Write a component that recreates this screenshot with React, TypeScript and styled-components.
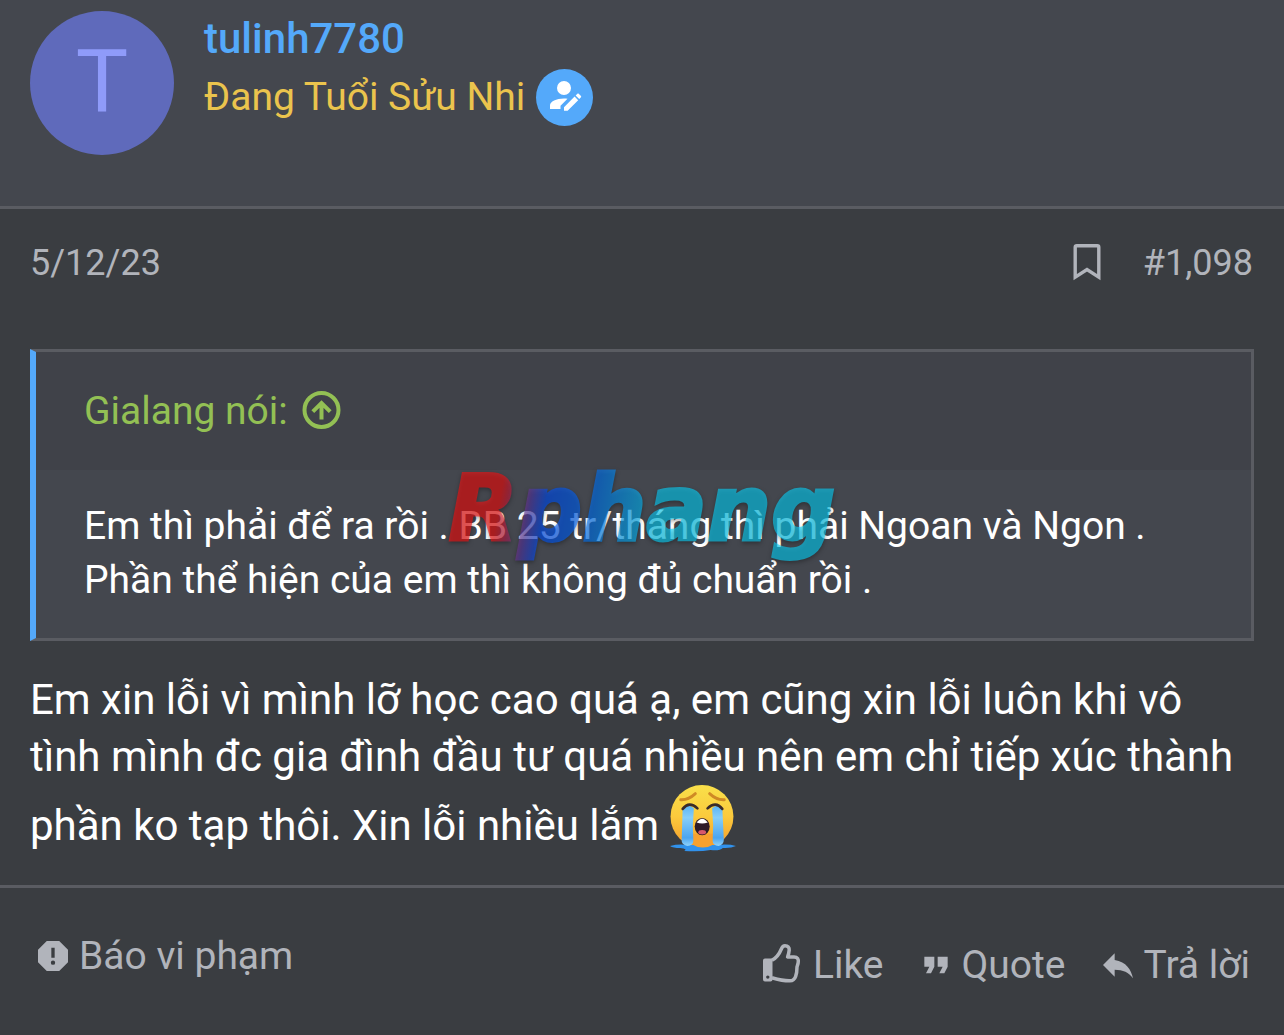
import React from "react";
import styled, { createGlobalStyle } from "styled-components";

const color = {
  page: "#3a3d41",
  panel: "#44474e",
  panelDark: "#404249",
  line: "#5a5c62",
  muted: "#b1b4bb",
  blue: "#54a9fa",
  yellow: "#ebc44d",
  green: "#93c054",
};

const GlobalStyle = createGlobalStyle`
  * { box-sizing: border-box; }
  body {
    margin: 0;
    background: ${color.page};
    color: #fff;
    font-family: Roboto, "Noto Sans", sans-serif;
  }
  a { color: inherit; text-decoration: none; }
`;

const Post = styled.article`
  position: relative;
  display: flex;
  flex-direction: column;
  min-height: 100vh;
`;

const UserBar = styled.header`
  display: flex;
  gap: 30px;
  padding: 11px 30px 51px;
  background: ${color.panel};
  border-bottom: 3px solid ${color.line};
`;

const Avatar = styled.a`
  display: grid;
  place-items: center;
  width: 144px;
  height: 144px;
  padding-bottom: 4px;
  border-radius: 50%;
  background: #5f6abb;
  && { color: #8f9bf9; }
  font-size: 88px;
  line-height: 1;
`;

const UserText = styled.div`
  display: flex;
  flex-direction: column;
`;

const UserName = styled.a`
  && { color: ${color.blue}; }
  font-size: 42px;
  font-weight: 500;
  line-height: 56px;
`;

const UserTitle = styled.div`
  display: flex;
  align-items: center;
  gap: 11px;
  color: ${color.yellow};
  font-size: 39px;
  line-height: 60px;
`;

const AuthorBadge = styled.span`
  display: grid;
  place-items: center;
  width: 57px;
  height: 57px;
  padding: 0 2px 4px 0;
  border-radius: 50%;
  background: ${color.blue};
  color: #fff;
`;

const Meta = styled.div`
  display: flex;
  align-items: center;
  justify-content: space-between;
  padding: 29px 31px 0 30px;
  color: ${color.muted};
  font-size: 36px;
  line-height: 50px;
`;

const MetaActions = styled.div`
  display: flex;
  align-items: center;
  gap: 42px;
`;

const IconButton = styled.button`
  display: flex;
  padding: 0;
  border: 0;
  background: none;
  color: inherit;
`;

const Content = styled.div`
  padding: 61px 30px 31px;
`;

const Quote = styled.blockquote`
  margin: 0;
  border: 3px solid ${color.line};
  border-left: 6px solid ${color.blue};
  background: ${color.panel};
  font-size: 39px;
  line-height: 54px;
`;

const QuoteTitle = styled.a`
  display: flex;
  align-items: center;
  gap: 14px;
  padding: 32px 48px;
  background: ${color.panelDark};
  && { color: ${color.green}; }
`;

const QuoteText = styled.p`
  margin: 0;
  padding: 29px 48px 31px;
`;

const Message = styled.p`
  margin: 30px 0 0;
  font-size: 42px;
  line-height: 57px;
`;

const Smilie = styled.svg`
  width: 66px;
  height: 67px;
  vertical-align: -12px;
`;

const ActionBar = styled.footer`
  display: flex;
  justify-content: space-between;
  padding: 41px 30px;
  border-top: 3px solid ${color.line};
`;

const ActionGroup = styled.div<{ $low?: boolean }>`
  display: flex;
  align-items: flex-start;
  gap: 25px;
  padding-top: ${(p) => (p.$low ? "9px" : "0")};
`;

const Action = styled.button`
  display: flex;
  align-items: center;
  gap: 6px;
  padding: 0 4px 0 3px;
  border: 0;
  background: none;
  color: ${color.muted};
  font: 400 39px/54px Roboto, "Noto Sans", sans-serif;
`;

const WatermarkLayer = styled.div`
  position: absolute;
  inset: 0;
  display: grid;
  place-items: center;
  padding-bottom: 18px;
  pointer-events: none;
  filter: drop-shadow(0 2px 2px rgba(0, 0, 0, 0.5));
`;

const Watermark = styled.span`
  padding: 0 8px;
  font: italic 700 90px/108px "DejaVu Sans", sans-serif;
  color: transparent;
  background: linear-gradient(100deg, #f81010 16%, #0050f8 27%, #0068f8 36%, #08d2fa 54%);
  background-clip: text;
  -webkit-background-clip: text;
  -webkit-text-stroke: 3px transparent;
  opacity: 0.6;
`;

const Glyph = ({ d, size = 40 }: { d: string; size?: number }) => (
  <svg width={size} height={size} viewBox="0 0 24 24" fill="currentColor" aria-hidden="true">
    <path d={d} />
  </svg>
);

const paths = {
  authorEdit:
    "M21.7,13.35L20.7,14.35L18.65,12.3L19.65,11.3C19.86,11.09 20.21,11.09 20.42,11.3L21.7,12.58C21.91,12.79 21.91,13.14 21.7,13.35M12,18.94L18.06,12.88L20.11,14.94L14.06,21H12V18.94M12,14C7.58,14 4,15.79 4,18V20H10V18.11L14,14.11C13.34,14.03 12.67,14 12,14M12,4A4,4 0 0,0 8,8A4,4 0 0,0 12,12A4,4 0 0,0 16,8A4,4 0 0,0 12,4Z",
  alert:
    "M13,13H11V7H13M12,17.3A1.3,1.3 0 0,1 10.7,16A1.3,1.3 0 0,1 12,14.7A1.3,1.3 0 0,1 13.3,16A1.3,1.3 0 0,1 12,17.3M15.73,3H8.27L3,8.27V15.73L8.27,21H15.73L21,15.73V8.27L15.73,3Z",
  quote: "M14,17H17L19,13V7H13V13H16M6,17H9L11,13V7H5V13H8L6,17Z",
  reply: "M10,9V5L3,12L10,19V14.9C15,14.9 18.5,16.5 21,20C20,15 17,10 10,9Z",
};

const BookmarkIcon = () => (
  <svg width="28" height="40" viewBox="0 0 28 40" fill="none" stroke="currentColor" strokeWidth="3.4" aria-hidden="true">
    <path d="M2.2 34.2V4.2Q2.2 2.7 3.7 2.7H24.3Q25.8 2.7 25.8 4.2V34.2L14 26.6Z" />
  </svg>
);

const ArrowCircleIcon = () => (
  <svg width="40" height="40" viewBox="0 0 40 40" fill="none" stroke="currentColor" strokeWidth="4" aria-hidden="true">
    <circle cx="19.5" cy="19" r="17" />
    <path d="M19.5 28.4V12M10.8 20.6L19.5 12L28.2 20.6" />
  </svg>
);

const ThumbIcon = () => (
  <svg width="46" height="42" viewBox="0 0 46 42" aria-hidden="true">
    <path
      d="M11 16.2C15.5 14 18.5 9.5 20.6 4.5C21.4 2.4 22.5 1.8 24 1.8C27 1.8 28.4 3.5 28.2 6C28 8.5 27.6 10.5 26.6 13H33C36.5 13 37.8 15 37.2 18.5C37 20 36.4 21.5 36 23C36 27 35.6 30 34.6 32.5C33.6 35.5 32 36.8 29 36.8C22 37 17 35.5 11 33.8"
      fill="none"
      stroke="currentColor"
      strokeWidth="3.5"
      strokeLinejoin="round"
    />
    <path
      d="M4 14.5H11.5V35.5Q11.5 37.5 9.5 37.5H4Q2 37.5 2 35.5V16.5Q2 14.5 4 14.5ZM6.8 31.4A1.7 1.7 0 1 0 6.8 34.8A1.7 1.7 0 1 0 6.8 31.4Z"
      fill="currentColor"
      fillRule="evenodd"
    />
  </svg>
);

const CryingFace = () => (
  <Smilie viewBox="0 0 65 66" role="img" aria-label="crying">
    <defs>
      <linearGradient id="face" x1="0" y1="0" x2="0" y2="1">
        <stop offset="0" stopColor="#f9e04a" />
        <stop offset="0.5" stopColor="#fbca3d" />
        <stop offset="1" stopColor="#f39a2b" />
      </linearGradient>
      <linearGradient id="tear" x1="0" y1="0" x2="0" y2="1">
        <stop offset="0" stopColor="#5bb4f5" />
        <stop offset="0.3" stopColor="#86cef9" />
        <stop offset="0.8" stopColor="#4ba5f0" />
        <stop offset="1" stopColor="#8fd2fb" />
      </linearGradient>
    </defs>
    <circle cx="31.5" cy="31" r="31" fill="url(#face)" />
    <path d="M0 60Q8 58 17 59H47Q58 58 65 60Q60 62.5 52 62Q49 65 40 64Q30 66 14 65Q18 63 10 62Q3 62 0 60Z" fill="#3192ec" />
    <path d="M21 48H43L44 58Q32 65 21 58Z" fill="#f7a12e" />
    <path d="M12.5 22Q18 18 23.5 23L22.5 40L23 55Q23 60 17 60Q11 59 11.5 54Z" fill="url(#tear)" />
    <path d="M41.5 23Q47 18 51.5 22L53 54Q53 59 48 60Q42 60 42 55L42.5 40Z" fill="url(#tear)" />
    <path d="M12.5 23.5Q19 15.5 27 23M37 23Q45 15.5 51.5 23.5" fill="none" stroke="#3a2b2a" strokeWidth="2.6" strokeLinecap="round" />
    <path d="M10.5 14.5Q18 15 25 8.5M39 8.5Q46 15 53.5 14.5" fill="none" stroke="#cf8a25" strokeWidth="2.8" strokeLinecap="round" />
    <ellipse cx="31.7" cy="41" rx="7.4" ry="8.5" fill="#2c1a26" />
    <path d="M26.2 37Q31.7 29.5 37.2 37Q31.7 39 26.2 37Z" fill="#fff" />
    <ellipse cx="31.7" cy="46.5" rx="3.8" ry="2.2" fill="#d8586b" />
  </Smilie>
);

export default function App() {
  return (
    <>
      <GlobalStyle />
      <Post>
        <UserBar>
          <Avatar href="#user">T</Avatar>
          <UserText>
            <UserName href="#user">tulinh7780</UserName>
            <UserTitle>
              Đang Tuổi Sửu Nhi
              <AuthorBadge>
                <Glyph d={paths.authorEdit} size={42} />
              </AuthorBadge>
            </UserTitle>
          </UserText>
        </UserBar>
        <Meta>
          <time dateTime="2023-12-05">5/12/23</time>
          <MetaActions>
            <IconButton type="button" aria-label="Bookmark">
              <BookmarkIcon />
            </IconButton>
            <a href="#post-1098">#1,098</a>
          </MetaActions>
        </Meta>
        <Content>
          <Quote>
            <QuoteTitle href="#source">
              Gialang nói:
              <ArrowCircleIcon />
            </QuoteTitle>
            <QuoteText>
              Em thì phải để ra rồi . BB 25 tr/tháng thì phải Ngoan và Ngon . Phần thể hiện của em thì không đủ chuẩn rồi .
            </QuoteText>
          </Quote>
          <Message>
            Em xin lỗi vì mình lỡ học cao quá ạ, em cũng xin lỗi luôn khi vô tình mình đc gia đình đầu tư quá nhiều nên em
            chỉ tiếp xúc thành phần ko tạp thôi. Xin lỗi nhiều lắm <CryingFace />
          </Message>
        </Content>
        <ActionBar>
          <ActionGroup>
            <Action type="button">
              <Glyph d={paths.alert} />
              Báo vi phạm
            </Action>
          </ActionGroup>
          <ActionGroup $low>
            <Action type="button">
              <ThumbIcon />
              Like
            </Action>
            <Action type="button">
              <Glyph d={paths.quote} />
              Quote
            </Action>
            <Action type="button">
              <Glyph d={paths.reply} />
              Trả lời
            </Action>
          </ActionGroup>
        </ActionBar>
        <WatermarkLayer>
          <Watermark>Rphang</Watermark>
        </WatermarkLayer>
      </Post>
    </>
  );
}
